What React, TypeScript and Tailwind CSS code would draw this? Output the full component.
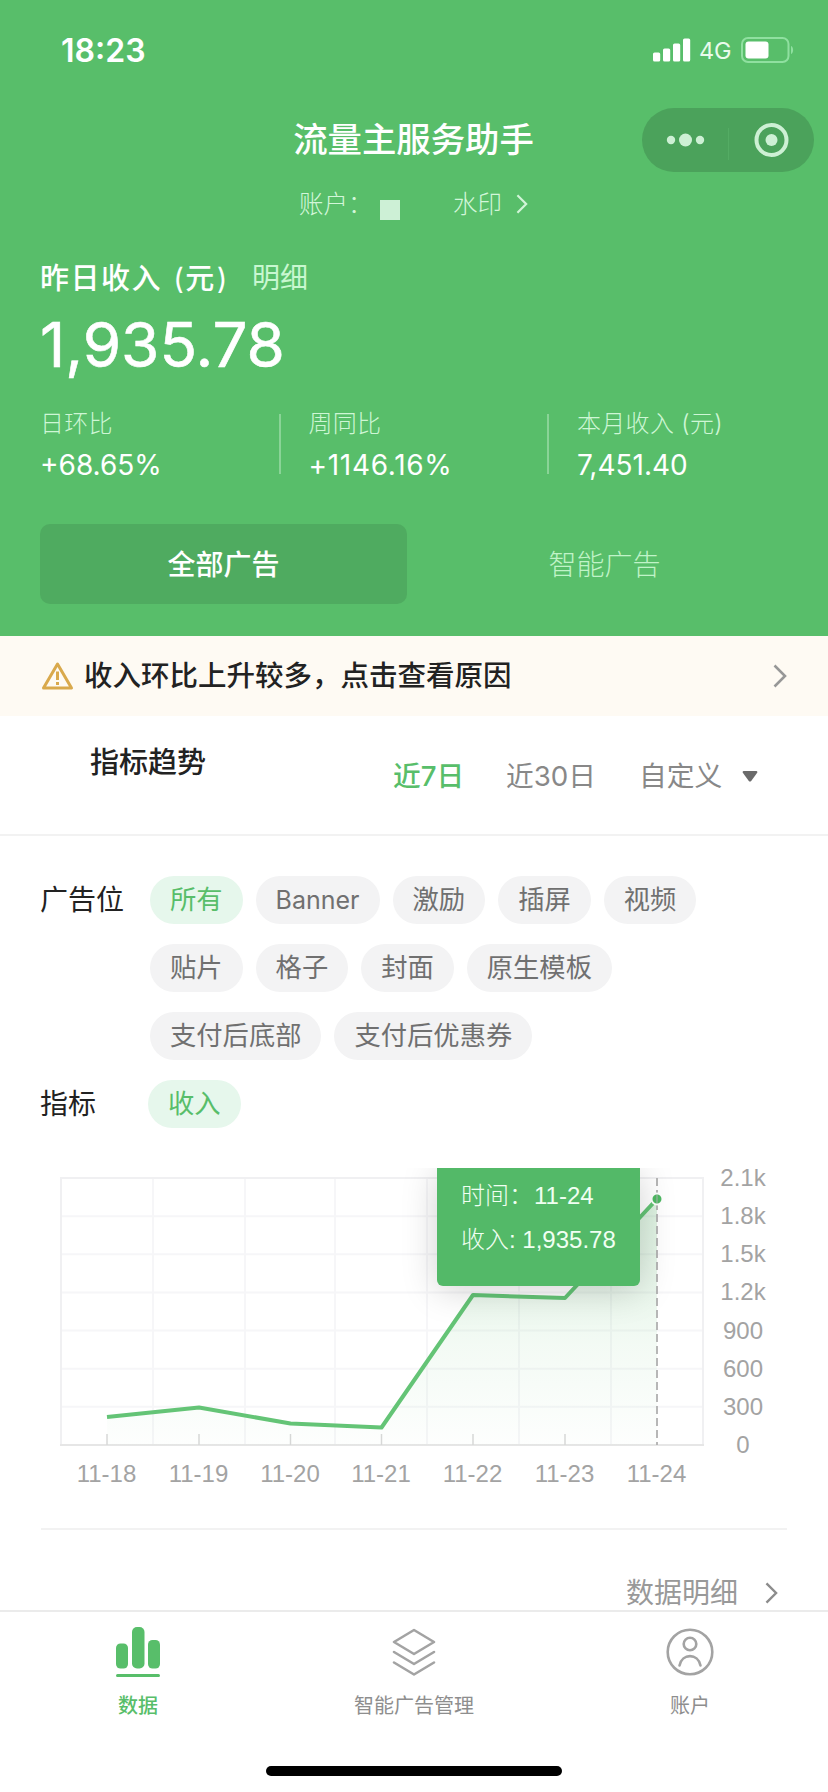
import React from "react";

const GREEN = "#58be6a";

const stats = [
  { label: "日环比", value: "+68.65%" },
  { label: "周同比", value: "+1146.16%" },
  { label: "本月收入 (元)", value: "7,451.40" },
];

const slotRows = [
  ["所有", "Banner", "激励", "插屏", "视频"],
  ["贴片", "格子", "封面", "原生模板"],
  ["支付后底部", "支付后优惠券"],
];

const points = [
  { day: "11-18", x: 107, y: 249 },
  { day: "11-19", x: 199, y: 239.5 },
  { day: "11-20", x: 290.5, y: 255.5 },
  { day: "11-21", x: 381.5, y: 259.5 },
  { day: "11-22", x: 473, y: 127 },
  { day: "11-23", x: 565, y: 130 },
  { day: "11-24", x: 657, y: 31 },
];

const yTicks = ["2.1k", "1.8k", "1.5k", "1.2k", "900", "600", "300", "0"];
const xGrid = [153, 245, 335, 427, 519, 611];

function Chevron({ className }: { className: string }) {
  return (
    <svg className={className} viewBox="0 0 14 24" fill="none" stroke="currentColor" strokeWidth="2.6">
      <path d="M1.5 1.5 12 12 1.5 22.5" />
    </svg>
  );
}

function StatusBar() {
  return (
    <div className="flex h-[100px] items-center justify-between pl-[61px] pr-[34px] text-white">
      <span className="pt-px text-[32px] font-semibold leading-none">18:23</span>
      <div className="flex items-center">
        <svg className="h-6 w-[38px]" viewBox="0 0 38 24" fill="currentColor">
          <rect x="0" y="14.500" width="7.200" height="9" rx="1.600" />
          <rect x="10" y="10.500" width="7.200" height="13" rx="1.600" />
          <rect x="20" y="5.500" width="7.200" height="18" rx="1.600" />
          <rect x="30" y="0.500" width="7.200" height="23" rx="1.600" />
        </svg>
        <span className="ml-2 w-[34px] pt-px text-[23.500px] leading-none tracking-[-0.3px] text-[#e9fbec]">4G</span>
        <svg className="ml-2 h-[26px] w-[53px]" viewBox="0 0 53 26">
          <rect x="1" y="1" width="46.500" height="24" rx="6" fill="none" stroke="#8fe0a0" strokeWidth="2" />
          <rect x="4.500" y="4.500" width="23" height="17" rx="3" fill="#fff" />
          <path d="M50 9v8c2.800-1 2.800-7 0-8Z" fill="#8fe0a0" />
        </svg>
      </div>
    </div>
  );
}

function Capsule() {
  return (
    <svg className="h-16 w-[172px]" viewBox="0 0 172 64">
      <rect width="172" height="64" rx="32" fill="#4ba25b" />
      <g fill="#cdf0d4">
        <circle cx="29" cy="32" r="4.200" />
        <circle cx="43.500" cy="32" r="6.500" />
        <circle cx="58" cy="32" r="4.200" />
        <circle cx="129.500" cy="32" r="6" />
      </g>
      <path d="M86.500 20v32" stroke="#54ac64" strokeWidth="1" />
      <circle cx="129.500" cy="32" r="15" fill="none" stroke="#cdf0d4" strokeWidth="4" />
    </svg>
  );
}

function Header() {
  return (
    <header className="h-[636px] bg-[#58be6a]">
      <StatusBar />
      <div className="grid h-20 grid-cols-[1fr_auto_1fr] items-center pr-[14px]">
        <span />
        <h1 className="pl-[13px] text-[34.400px] font-medium leading-none text-white">流量主服务助手</h1>
        <div className="flex justify-end">
          <Capsule />
        </div>
      </div>
      <div className="flex h-12 items-center pl-[299px] text-[24.500px] font-light leading-none text-[#d2f6d9]">
        <span className="w-[81px]">账户：</span>
        <span className="mt-3 size-5 bg-[#cdf0d6]" />
        <span className="ml-[53px]">水印</span>
        <Chevron className="ml-[14px] h-5 w-3 text-[#d2f5d8]" />
      </div>

      <div className="flex h-[100px] items-center pl-[40px] leading-none">
        <span className="w-[212px] text-[29px] font-medium tracking-[1.500px] text-white">
          昨日收入 <span className="ml-[2px] font-normal">(</span>元<span className="ml-px font-normal">)</span>
        </span>
        <span className="text-[28px] text-[#c8f7d0]">明细</span>
      </div>
      <div className="-mt-4 flex h-[66px] items-center pl-[40px] text-[62px] leading-none text-white [-webkit-text-stroke:0.6px_white]">
        1,935.78
      </div>

      <div className="mt-[34px] flex pl-[40px]">
        {stats.map((s, i) => (
          <div key={s.label} className={i < 2 ? "flex w-[268.500px] shrink-0 items-center" : "flex items-center"}>
            <div className="flex h-[67px] flex-1 flex-col justify-between leading-none">
              <span className="whitespace-nowrap text-[24px] font-light tracking-[0.3px] text-[#cef6d5]">{s.label}</span>
              <span className={i === 1 ? "text-[28px] tracking-[0.7px] text-white" : "text-[28px] text-white"}>
                {s.value}
              </span>
            </div>
            {i < 2 && <span className="mr-7 mb-1 h-[60px] w-[2px] bg-[#8ad497]" />}
          </div>
        ))}
      </div>

      <div className="mt-[45px] flex gap-[14px] pl-[40px] text-[28px] leading-none">
        <button className="h-20 w-[367px] rounded-[10px] bg-[#4fab60] pt-px font-medium text-white">全部广告</button>
        <button className="h-20 w-[367px] pt-px font-light text-[#c0f3c8]">智能广告</button>
      </div>
    </header>
  );
}

function Notice() {
  return (
    <div className="flex h-20 items-center bg-[#fefaf3] pl-[41px] pr-[41px]">
      <svg className="h-[30px] w-[33px]" viewBox="0 0 33 30" fill="none" stroke="#d9a94c" strokeLinejoin="round">
        <path d="M16.500 3 30.500 27H2.500Z" strokeWidth="3" />
        <path d="M16.500 10.500v8.500" strokeWidth="3" />
        <path d="M16.500 21v3" strokeWidth="3" />
      </svg>
      <span className="ml-[10px] pt-px text-[28.500px] font-medium leading-none text-[#222]">收入环比上升较多，点击查看原因</span>
      <Chevron className="ml-auto h-6 w-[14px] text-[#979797]" />
    </div>
  );
}

function TrendHeader() {
  return (
    <div className="flex h-[120px] items-start border-b-2 border-[#f2f2f2] pl-[90px] leading-none">
      <h2 className="mt-[32px] w-[303px] text-[29px] font-medium text-[#222]">指标趋势</h2>
      <div className="mt-[47px] flex items-center text-[27.700px] text-[#888]">
        <span className="w-[113px] font-medium text-[#58be6a]">近7日</span>
        <span className="w-[133px]">近30日</span>
        <span className="w-[103px]">自定义</span>
        <svg className="h-[11px] w-4" viewBox="0 0 16 11" fill="#6a6a6a">
          <path d="M1.500 0h13q1.500 0.500 0.500 2L9.200 10q-1.200 1.200-2.400 0L1 2Q0 0.500 1.500 0Z" />
        </svg>
      </div>
    </div>
  );
}

function Chip({ label, active }: { label: string; active?: boolean }) {
  return (
    <button
      className={
        active
          ? "flex h-12 items-center rounded-full bg-[#e6f7ec] px-5 text-[26.300px] leading-none text-[#58be6a]"
          : "flex h-12 items-center rounded-full bg-[#f3f3f4] px-5 text-[26.300px] leading-none text-[#707070]"
      }
    >
      {label === "Banner" ? <span className="text-[25px]">{label}</span> : label}
    </button>
  );
}

function Filters() {
  return (
    <div className="pl-[40px] pt-10 text-[28px] leading-none text-[#222]">
      <div className="flex">
        <span className="flex h-12 w-[110px] items-center">广告位</span>
        <div className="flex flex-col gap-5">
          {slotRows.map((row, r) => (
            <div key={r} className="flex gap-[13px]">
              {row.map((label, i) => (
                <Chip key={label} label={label} active={r === 0 && i === 0} />
              ))}
            </div>
          ))}
        </div>
      </div>
      <div className="mt-5 flex">
        <span className="flex h-12 w-[108px] items-center">指标</span>
        <Chip label="收入" active />
      </div>
    </div>
  );
}

function Chart() {
  const line = points.map((p) => `${p.x},${p.y}`).join(" ");
  return (
    <div className="relative mt-10 h-[360px]">
      <svg className="block h-[360px] w-[828px] overflow-visible" viewBox="0 0 828 360">
        <defs>
          <linearGradient id="area" x1="0" y1="0" x2="0" y2="1">
            <stop offset="0" stopColor={GREEN} stopOpacity="0.220" />
            <stop offset="0.600" stopColor={GREEN} stopOpacity="0.070" />
            <stop offset="1" stopColor={GREEN} stopOpacity="0.010" />
          </linearGradient>
        </defs>
        <g stroke="#f6f6f8" strokeWidth="2">
          {xGrid.map((x) => (
            <path key={x} d={`M${x} 10V277`} />
          ))}
          {yTicks.slice(1, 7).map((t, i) => (
            <path key={t} d={`M61 ${10 + (i + 1) * 38.140}H703`} />
          ))}
        </g>
        <path d="M61 277V10H703V277" fill="none" stroke="#f0f0f2" strokeWidth="2" />
        <path d="M60 277H704" stroke="#e6e6e6" strokeWidth="2" />
        {points.slice(0, 6).map((p) => (
          <path key={p.day} d={`M${p.x} 266V277`} stroke="#d8d8d8" strokeWidth="1.500" />
        ))}
        <polygon points={`107,277 ${line} 657,277`} fill="url(#area)" />
        <path d="M657 10V277" stroke="#b0b0b0" strokeWidth="1.800" strokeDasharray="8 4" />
        <polyline points={line} fill="none" stroke="#64c476" strokeWidth="4" strokeLinejoin="round" />
        <circle cx="657" cy="31" r="5.500" fill="#4eb963" stroke="#fff" strokeWidth="2" />
        <path d="M657 27v8" stroke="#8fb597" strokeWidth="1.500" />
        <g className="font-['Liberation_Sans',sans-serif] text-[24px]" fill="#a3a3a3" textAnchor="middle">
          {yTicks.map((t, i) => (
            <text key={t} x="743" y={18 + i * 38.140}>
              {t}
            </text>
          ))}
          {points.map((p) => (
            <text key={p.day} x={p.x - 0.5} y="314">
              {p.day}
            </text>
          ))}
        </g>
      </svg>
      <div className="absolute left-0 top-0 h-[180px] w-[828px] overflow-hidden">
        <div className="ml-[437px] h-[118px] w-[203px] rounded-b-md bg-[#53b968] pl-6 pt-[14px] text-[24px] font-light leading-none text-[#f0fff2] shadow-[0_4px_36px_rgba(0,0,0,0.18)]">
          <div className="flex h-7 items-center whitespace-pre">
            <span>时间：</span>
            <span className="ml-px font-['Liberation_Sans',sans-serif] font-normal">11-24</span>
          </div>
          <div className="mt-4 flex h-7 items-center whitespace-pre">
            <span>收入</span>
            <span className="font-['Liberation_Sans',sans-serif] font-normal">: 1,935.78</span>
          </div>
        </div>
      </div>
    </div>
  );
}

function TabBar() {
  return (
    <nav className="grid h-[182px] grid-cols-3 border-t-2 border-[#ebebeb] bg-white pt-[15px] text-[20px] leading-none text-[#8e8e8e]">
      <div className="flex flex-col items-center text-[#58be6a]">
        <svg className="h-[52px] w-[44px]" viewBox="0 0 44 52" fill="currentColor">
          <rect x="0" y="16.500" width="12" height="25" rx="4.500" />
          <rect x="16" y="0" width="12.500" height="41.500" rx="5" />
          <rect x="32" y="13" width="12" height="28.500" rx="4.500" />
          <rect x="0" y="47" width="44" height="3" rx="1.500" />
        </svg>
        <span className="mt-[17px] font-medium">数据</span>
      </div>
      <div className="flex flex-col items-center">
        <svg
          className="h-[52px] w-[44px]"
          viewBox="0 0 44 52"
          fill="none"
          stroke="#a3a3a3"
          strokeWidth="2.600"
          strokeLinecap="round"
          strokeLinejoin="round"
        >
          <path d="M22 3 42 15 22 27 2 15Z" />
          <path d="M2 25 22 37 42 25" />
          <path d="M2 35.500 22 47.500 42 35.500" />
        </svg>
        <span className="mt-[17px]">智能广告管理</span>
      </div>
      <div className="flex flex-col items-center">
        <svg
          className="h-[52px] w-[50px]"
          viewBox="0 0 50 52"
          fill="none"
          stroke="#a3a3a3"
          strokeWidth="2.600"
          strokeLinecap="round"
        >
          <circle cx="25" cy="25" r="22.300" />
          <circle cx="25" cy="17" r="6.300" />
          <path d="M14.500 38.500C17 26 33 26 35.500 38.500" />
        </svg>
        <span className="mt-[17px]">账户</span>
      </div>
      <div className="col-span-3 flex items-start justify-center">
        <span className="mt-[34px] h-[10px] w-[296px] rounded-full bg-black" />
      </div>
    </nav>
  );
}

export default function App() {
  return (
    <div className="h-[1792px] w-[828px] overflow-hidden bg-white font-['Inter','Noto_Sans_CJK_SC',sans-serif]">
      <Header />
      <Notice />
      <TrendHeader />
      <Filters />
      <Chart />
      <div className="mx-[41px] flex h-[82px] items-start border-t-2 border-[#f2f2f2] pl-[585px] text-[28px] leading-none text-[#999]">
        <span className="mt-[49px]">数据明细</span>
        <Chevron className="ml-[27px] mt-[52px] h-[22px] w-[13px] shrink-0 text-[#8c8c8c]" />
      </div>
      <TabBar />
    </div>
  );
}
